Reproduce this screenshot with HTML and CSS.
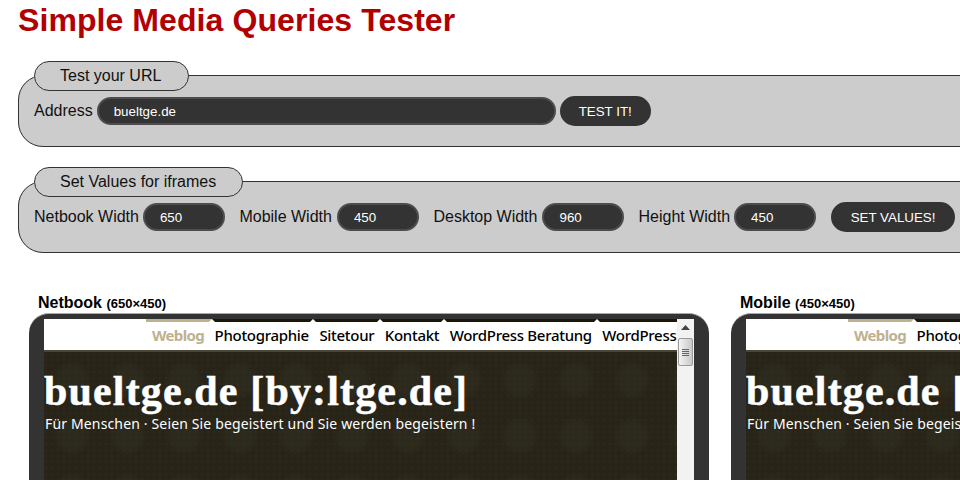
FILE: index.html
```html
<!DOCTYPE html>
<html lang="en">
<head>
<meta charset="utf-8">
<title>Simple Media Queries Tester</title>
<link rel="stylesheet" href="styles.css">
</head>
<body>
<div class="page">
  <h1 class="title">Simple Media Queries Tester</h1>
  <form class="panel">
    <fieldset class="group">
      <legend class="group-legend legend-url">Test your URL</legend>
      <div class="row">
        <label class="field-label">Address</label>
        <input class="field field-url" type="text" value="bueltge.de">
        <button class="btn btn-test" type="button">TEST IT!</button>
      </div>
    </fieldset>
    <fieldset class="group">
      <legend class="group-legend">Set Values for iframes</legend>
      <div class="row">
        <label class="field-label">Netbook Width</label>
        <input class="field field-num" type="text" value="650">
        <label class="field-label label-next">Mobile Width</label>
        <input class="field field-num" type="text" value="450">
        <label class="field-label label-next">Desktop Width</label>
        <input class="field field-num" type="text" value="960">
        <label class="field-label label-last">Height Width</label>
        <input class="field field-num" type="text" value="450">
        <button class="btn btn-set" type="button">SET VALUES!</button>
      </div>
    </fieldset>
  </form>
  <div class="devices">
    <section class="device device-netbook">
      <h2 class="device-name">Netbook <small class="device-size">(650×450)</small></h2>
      <div class="bezel">
        <div class="screen">
          <div class="site">
            <nav class="site-nav">
              <span class="strip"><span class="strip-active"></span><i class="notch notch-a"></i><i class="notch notch-b"></i><i class="notch notch-c"></i><i class="notch notch-d"></i><i class="notch notch-e"></i></span>
              <a class="nav-item nav-active">Weblog</a><a class="nav-item">Photographie</a><a class="nav-item">Sitetour</a><a class="nav-item">Kontakt</a><a class="nav-item">WordPress Beratung</a><a class="nav-item">WordPress</a>
            </nav>
            <header class="site-head">
              <div class="site-title">bueltge.de [by:ltge.de]</div>
              <div class="site-tag">Für Menschen · Seien Sie begeistert und Sie werden begeistern !</div>
            </header>
          </div>
          <div class="scrollbar">
            <div class="scroll-up"><svg width="9" height="5" viewBox="0 0 9 5"><path d="M4.5 0 9 5H0z" fill="#444"/></svg></div>
            <div class="scroll-thumb"><span class="grip"></span><span class="grip"></span><span class="grip"></span><span class="grip"></span></div>
          </div>
        </div>
      </div>
    </section>
    <section class="device device-mobile">
      <h2 class="device-name">Mobile <small class="device-size">(450×450)</small></h2>
      <div class="bezel">
        <div class="screen">
          <div class="site">
            <nav class="site-nav">
              <span class="strip"><span class="strip-active"></span><i class="notch notch-a"></i></span>
              <a class="nav-item nav-active">Weblog</a><a class="nav-item">Photographie</a><a class="nav-item">Sitetour</a>
            </nav>
            <header class="site-head">
              <div class="site-title">bueltge.de [by:ltge.de]</div>
              <div class="site-tag">Für Menschen · Seien Sie begeistert und Sie werden begeistern !</div>
            </header>
          </div>
        </div>
      </div>
    </section>
  </div>
</div>
</body>
</html>
```
FILE: styles.css
```css
html, body {
  margin: 0;
  padding: 0;
  overflow: hidden;
  height: 480px;
  background: #fff;
}
body {
  font-family: "Liberation Sans", Arial, sans-serif;
  color: #111;
}
.page {
  width: 1500px;
  padding-left: 18px;
  box-sizing: border-box;
}
.title {
  margin: 0;
  font-size: 32px;
  line-height: 40px;
  height: 61px;
  font-weight: bold;
  letter-spacing: 0.08px;
  color: #b00000;
}
.panel {
  margin: 0;
  width: 1200px;
}
.group {
  margin: 0 0 20px;
  padding: 0 15px;
  height: 86px;
  box-sizing: border-box;
  border: 1px solid #333;
  border-radius: 25px;
  background: #ccc;
}
.group-legend {
  margin: 0 0 -1.5px;
  padding: 0 26px 0 25px;
  height: 29.5px;
  box-sizing: border-box;
  line-height: 28px;
  font-size: 16px;
  border: 1px solid #333;
  border-radius: 15px;
  background: #ccc;
}
.legend-url {
  padding-right: 27px;
}
.row {
  display: flex;
  align-items: center;
  height: 30px;
  margin-top: 7px;
}
.field-label {
  font-size: 16px;
  line-height: 20px;
  margin-right: 4px;
}
.label-next {
  margin-left: 14.5px;
  margin-right: 5px;
}
.label-last {
  margin-left: 14px;
  margin-right: 4px;
}
.field {
  box-sizing: border-box;
  height: 28px;
  margin: 0;
  padding: 0 0 0 15px;
  border: 2px solid #4c4c4c;
  border-radius: 14px;
  background: #333;
  color: #fff;
  font: 13.33px "Liberation Sans", Arial, sans-serif;
  outline: 0;
}
.field-url {
  width: 459px;
}
.field-num {
  width: 82px;
}
.btn {
  box-sizing: border-box;
  height: 30px;
  margin: 0;
  border: 0;
  border-radius: 15px;
  background: #333;
  color: #fff;
  font: 13.33px "Liberation Sans", Arial, sans-serif;
  text-transform: uppercase;
  padding: 0;
}
.btn-test {
  width: 91px;
  margin-left: 4px;
}
.btn-set {
  width: 124px;
  margin-left: 15px;
}
.devices {
  display: flex;
  margin-top: 41px;
  padding-left: 11px;
  gap: 22px;
}
.device-name {
  margin: 0 0 0 9px;
  font-size: 16px;
  line-height: 18px;
  height: 19px;
  font-weight: bold;
  color: #000;
}
.device-size {
  font-size: 13px;
}
.bezel {
  box-sizing: border-box;
  padding: 5px 15px 15px;
  background: #333;
  border-top: 1px solid #aaa;
  border-radius: 20px 20px 0 0;
}
.device-netbook .bezel {
  width: 680px;
}
.device-mobile .bezel {
  width: 480px;
}
.screen {
  display: flex;
  height: 450px;
  overflow: hidden;
  background: #fff;
}
.site {
  flex: 1;
  min-width: 0;
  overflow: hidden;
}
.site-nav {
  position: relative;
  display: flex;
  height: 31px;
  box-sizing: border-box;
  padding: 7px 0 0 108px;
  background: #fff;
  white-space: nowrap;
  font: 500 15px/18px "Noto Sans", "Open Sans", sans-serif;
}
.strip {
  position: absolute;
  left: 168px;
  right: 0;
  top: 0;
  height: 3px;
  background: #1a1608;
}
.strip-active {
  position: absolute;
  left: -66px;
  width: 66px;
  top: 0;
  height: 3px;
  background: #bdb28f;
}
.notch {
  position: absolute;
  top: 0;
  width: 0;
  height: 0;
  margin-left: -3px;
  border-left: 3px solid transparent;
  border-right: 3px solid transparent;
  border-bottom: 3px solid #fff;
}
.notch-a { left: 0; }
.notch-b { left: 101px; }
.notch-c { left: 168px; }
.notch-d { left: 232px; }
.notch-e { left: 385px; }
.nav-item {
  margin-right: 10.5px;
  color: #000;
  letter-spacing: -0.3px;
}
.nav-active {
  color: #bdb28f;
  font-weight: bold;
  letter-spacing: -0.65px;
}
.site-head {
  height: 420px;
  padding-top: 16px;
  box-sizing: border-box;
  border-top: 2px solid #4a4636;
  background-color: #282518;
  background-image:
    radial-gradient(circle at 28px 28px, rgba(255,255,255,0.018) 12px, transparent 20px),
    radial-gradient(circle at 2px 2px, rgba(255,255,255,0.025) 1px, transparent 1.5px);
  background-size: 56px 56px, 6px 6px;
  color: #fff;
}
.site-title {
  font: bold 42px/46px "Liberation Serif", serif;
  letter-spacing: 1.15px;
  -webkit-text-stroke: 0.5px #fff;
  white-space: nowrap;
}
.site-tag {
  font: 14px/20px "Noto Sans", "Open Sans", sans-serif;
  padding-left: 1px;
  white-space: nowrap;
  letter-spacing: 0.15px;
}
.scrollbar {
  width: 17px;
  flex: none;
  background: #f2f2f2;
  padding-top: 19px;
  position: relative;
  box-sizing: border-box;
}
.scroll-up {
  position: absolute;
  top: 6px;
  left: 4px;
  line-height: 0;
}
.scroll-thumb {
  box-sizing: border-box;
  height: 28px;
  margin: 0 1px;
  border: 1px solid #999;
  border-radius: 2px;
  background: linear-gradient(90deg, #f4f4f4, #c8c8c8);
  display: flex;
  flex-direction: column;
  align-items: center;
  justify-content: center;
  gap: 1px;
}
.grip {
  width: 7px;
  height: 1px;
  background: #666;
}
```
